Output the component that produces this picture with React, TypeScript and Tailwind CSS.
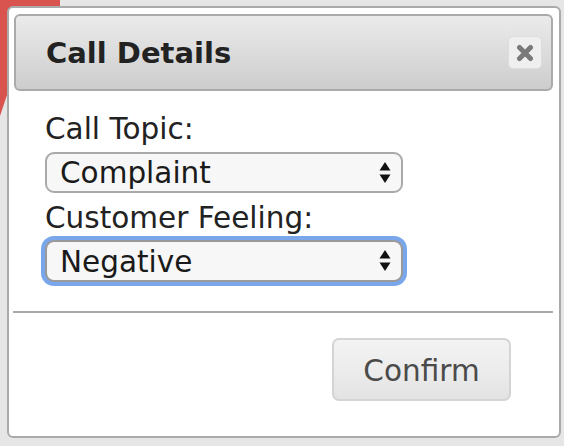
import React from "react";

const font = { fontFamily: '"DejaVu Sans", Verdana, sans-serif' };

function Arrows() {
  return (
    <svg width="12" height="22" viewBox="0 0 12 22" className="shrink-0">
      <polygon points="6,0 11.5,8.5 0.5,8.5" fill="#111" />
      <polygon points="0.5,12.5 11.5,12.5 6,21" fill="#111" />
    </svg>
  );
}

function FakeSelect({ value, focused }: { value: string; focused?: boolean }) {
  return (
    <div
      className={
        focused
          ? "w-[358px] h-[42px] rounded-[9px] border-2 border-[#9a9a9a] bg-[#f7f7f7] flex items-center pl-[13px] pr-[10px] ring-4 ring-[#7aa6ec]"
          : "w-[358px] h-[41px] rounded-[9px] border-2 border-[#aaaaaa] bg-[#f7f7f7] flex items-center pl-[13px] pr-[10px]"
      }
    >
      <span className="flex-1 text-[29.5px] leading-none text-[#1a1a1a] mt-[3px]">{value}</span>
      <Arrows />
    </div>
  );
}

export default function App() {
  return (
    <div className="relative w-[564px] h-[446px] overflow-hidden bg-[#e6e6e6]" style={font}>
      <svg className="absolute left-0 top-0" width="70" height="130">
        <polygon points="0,0 60,0 60,80 8,92 0,116" fill="#d9534f" />
      </svg>
      <div className="relative ml-[7px] mt-[6px] w-[554px] h-[432px] rounded-[6px] border-2 border-[#aaaaaa] bg-white pt-[6px] pl-[5px] pr-[6px] flex flex-col">
        <div className="h-[77px] rounded-[6px] border-2 border-[#aaaaaa] bg-gradient-to-b from-[#ebebeb] to-[#cdcdcd] flex items-center justify-between pl-[30px] pr-[9px]">
          <span className="text-[29px] font-bold text-[#222] leading-none mt-[2px]">Call Details</span>
          <div className="w-[34px] h-[33px] rounded-[5px] bg-[#efefef] border border-[#dddddd] flex items-center justify-center">
            <svg width="18" height="18" viewBox="0 0 18 18">
              <path d="M3.5 3.5 L14.5 14.5 M14.5 3.5 L3.5 14.5" stroke="#7a7a7a" strokeWidth="5" strokeLinecap="round" />
            </svg>
          </div>
        </div>
        <div className="pl-[31px] pt-[22px] flex flex-col text-[#222]">
          <div className="text-[29.5px] leading-[33px] mb-[6px]">Call Topic:</div>
          <FakeSelect value="Complaint" />
          <div className="text-[29.5px] leading-[33px] mt-[9px] mb-[5px]">Customer Feeling:</div>
          <FakeSelect value="Negative" focused />
        </div>
        <div className="mt-[29px] ml-[-1px] h-[2px] bg-[#aaaaaa]" />
        <div className="flex justify-end pr-[42px] pt-[25px]">
          <button className="w-[179px] h-[63px] rounded-[7px] border-2 border-[#d4d4d4] bg-gradient-to-b from-[#f3f3f3] via-[#ececec] to-[#e3e3e3] text-[29.5px] text-[#4a4a4a] pt-[4px]">
            Confirm
          </button>
        </div>
      </div>
    </div>
  );
}
